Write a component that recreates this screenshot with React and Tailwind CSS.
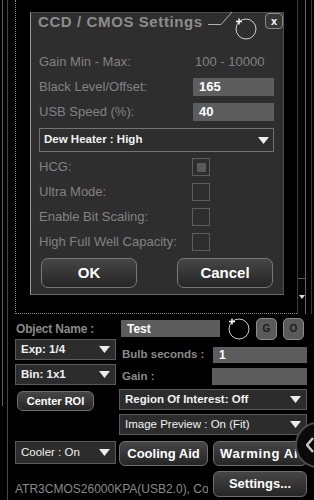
const FONT = "font-['Liberation_Sans',Arial,sans-serif]";

// small white down triangle used by all the combo boxes
function Caret() {
  return (
    <svg width="11" height="7" viewBox="0 0 11 7" className="shrink-0">
      <path d="M0 0H11L5.5 7Z" fill="#ececec" />
    </svg>
  );
}

// busy indicator: thin ring with a sparkle
function Busy() {
  return (
    <svg width="22" height="22" viewBox="0 0 22 22" className="shrink-0 overflow-visible">
      <circle cx="11" cy="11" r="10" fill="none" stroke="#d0d0d0" strokeWidth="1" />
      <path d="M4 0.5v6M1 3.5h6" stroke="#ffffff" strokeWidth="1.4" />
    </svg>
  );
}

function Combo({ label, bold = true, className = "" }) {
  return (
    <div
      className={`flex items-center justify-between border border-[#5a5a5a] bg-[#2c2c2c] pl-[5px] pr-[5px] ${className}`}
    >
      <span
        className={`whitespace-nowrap text-[11.5px] text-[#f2f2f2] ${bold ? "font-bold" : ""}`}
      >
        {label}
      </span>
      <Caret />
    </div>
  );
}

function DarkButton({ children, className = "" }) {
  return (
    <div
      className={`flex items-center justify-center rounded-[6px] border border-[#6e6e6e] bg-linear-to-b from-[#464646] to-[#262626] font-bold text-white ${className}`}
    >
      {children}
    </div>
  );
}

function Field({ value, className = "" }) {
  return (
    <div
      className={`flex items-center bg-[#5d5d5d] pl-[6px] text-[12px] font-bold text-white ${className}`}
    >
      {value}
    </div>
  );
}

function CheckRow({ label, checked }) {
  return (
    <div className="mt-[7px] flex h-[18px] items-center pl-[8px] pr-[9px]">
      <span className="w-[153px] whitespace-nowrap text-[13px] text-[#828282]">{label}</span>
      <div className="flex h-[18px] w-[18px] items-center justify-center border border-[#5c5c5c]">
        {checked && <div className="h-[9px] w-[9px] bg-[#5a5a5a]" />}
      </div>
    </div>
  );
}

function SettingsDialog() {
  return (
    <div className="ml-[14px] mt-[12px] flex h-[283px] w-[254px] flex-col border border-[#4e4e4e] border-l-[#9a9a9a] border-b-[#6a6a6a] bg-[#2e2e2e]">
      {/* title bar */}
      <div className="flex h-[17px] items-start">
        <span className="w-[176px] whitespace-nowrap pl-[7px] text-[15px] font-bold leading-[17px] tracking-[0.6px] text-[#8d8d8d]">
          CCD / CMOS Settings
        </span>
        <svg width="26" height="17" viewBox="0 0 26 17" className="shrink-0 overflow-visible">
          <path d="M1 11.5H14L25 -1" fill="none" stroke="#b0b0b0" strokeWidth="1" />
        </svg>
        <div className="ml-[2px] mt-[5px]">
          <Busy />
        </div>
        <div className="ml-[8px] flex h-[16px] w-[18px] items-center justify-center rounded-[4px] border border-[#8a8a8a] bg-[#363636] text-[11px] font-bold leading-none text-white">
          x
        </div>
      </div>

      <div className="mt-[23px] flex h-[18px] items-center pl-[8px] pr-[9px] text-[13px] text-[#828282]">
        <span className="flex-1">Gain Min - Max:</span>
        <span className="w-[81px] pl-[2px]">100 - 10000</span>
      </div>
      <div className="mt-[7px] flex h-[18px] items-center pl-[8px] pr-[9px]">
        <span className="flex-1 text-[13px] text-[#828282]">Black Level/Offset:</span>
        <Field value="165" className="h-[18px] w-[81px] text-[13px]" />
      </div>
      <div className="mt-[7px] flex h-[18px] items-center pl-[8px] pr-[9px]">
        <span className="flex-1 text-[13px] text-[#828282]">USB Speed (%):</span>
        <Field value="40" className="h-[18px] w-[81px] text-[13px]" />
      </div>

      <div className="mt-[7px] pl-[8px] pr-[9px]">
        <div className="flex h-[24px] items-center justify-between border border-[#747474] pl-[4px] pr-[4px]">
          <span className="text-[11.5px] font-bold text-[#f0f0f0]">Dew Heater : High</span>
          <Caret />
        </div>
      </div>

      <div className="-mt-px" />
      <CheckRow label="HCG:" checked />
      <CheckRow label="Ultra Mode:" />
      <CheckRow label="Enable Bit Scaling:" />
      <CheckRow label="High Full Well Capacity:" />

      <div className="mt-[7px] flex justify-between pl-[10px] pr-[10px]">
        <DarkButton className="h-[30px] w-[96px] rounded-[7px] border-[#777] text-[15px]">OK</DarkButton>
        <DarkButton className="h-[30px] w-[96px] rounded-[7px] border-[#777] text-[15px]">Cancel</DarkButton>
      </div>
    </div>
  );
}

export default function App() {
  return (
    <div className={`relative flex h-[500px] w-[314px] overflow-hidden bg-black ${FONT}`}>
      {/* left frame lines */}
      <div className="flex w-[15px] shrink-0">
        <div className="ml-[2px] h-[406px] w-px bg-[#5e5e5e]" />
        <div className="ml-[4px] h-full w-px bg-[#474747]" />
      </div>

      <div className="flex min-w-0 flex-1 flex-col">
        {/* scrolling settings area */}
        <div className="flex h-[314px] shrink-0">
          <div className="w-[282px] border-b border-l border-dotted border-[#8a8a8a]">
            <SettingsDialog />
          </div>
          <div className="flex w-[9px] flex-col justify-end border-l border-r border-l-[#3a3a3a] border-r-[#626262] bg-[#050505]">
            <div className="flex h-[36px] items-center justify-center border-t border-[#555]">
              <svg width="6" height="4" viewBox="0 0 6 4">
                <path d="M0 0H6L3 4Z" fill="#dddddd" />
              </svg>
            </div>
          </div>
          <div className="ml-[5px] w-px bg-[#383838]" />
        </div>

        {/* camera controls */}
        <div className="flex flex-col pr-[7px]">
          <div className="mt-[4px] flex h-[21px] items-center">
            <span className="w-[106px] pl-[1px] text-[12px] font-bold tracking-[-0.2px] text-[#8a8a8a]">
              Object Name :
            </span>
            <Field value="Test" className="h-[17px] w-[99px] text-[12px]" />
            <div className="ml-[8px]">
              <Busy />
            </div>
            <div className="ml-[6px] flex h-[22px] w-[21px] items-center justify-center rounded-[5px] border border-[#8c8c8c] bg-[#5a5a5a] text-[10px] font-bold text-[#1c1c1c]">
              G
            </div>
            <div className="ml-[6px] flex h-[22px] w-[21px] items-center justify-center rounded-[5px] border border-[#8c8c8c] bg-[#5a5a5a] text-[10px] font-bold text-[#1c1c1c]">
              O
            </div>
          </div>

          <div className="flex">
            <div className="flex w-[101px] flex-col">
              <Combo label="Exp: 1/4" className="h-[21px]" />
              <Combo label="Bin: 1x1" className="mt-[4px] h-[21px]" />
              <DarkButton className="ml-[2px] mt-[6px] h-[20px] w-[77px] text-[11px]">Center ROI</DarkButton>
            </div>
            <div className="ml-[3px] flex flex-1 flex-col">
              <div className="mt-[8px] flex h-[16px] items-center">
                <span className="w-[94px] pl-[3px] text-[11.5px] font-bold text-[#8a8a8a]">Bulb seconds :</span>
                <Field value="1" className="h-[16px] flex-1" />
              </div>
              <div className="mt-[5px] flex h-[17px] items-center">
                <span className="w-[93px] pl-[3px] text-[11.5px] font-bold text-[#8a8a8a]">Gain :</span>
                <Field value="" className="h-[17px] flex-1" />
              </div>
              <Combo label="Region Of Interest: Off" className="mt-[4px] h-[21px]" />
              <Combo label="Image Preview : On (Fit)" bold={false} className="mt-[4px] h-[21px]" />
            </div>
          </div>

          <div className="mt-[6px] flex items-start">
            <Combo label="Cooler : On" bold={false} className="h-[23px] w-[101px]" />
            <DarkButton className="ml-[3px] h-[25px] w-[89px] text-[13px]">Cooling Aid</DarkButton>
            <DarkButton className="ml-[5px] h-[25px] w-[94px] justify-start whitespace-nowrap pl-[6px] text-[13px] tracking-[0.7px]">
              Warming Aid
            </DarkButton>
          </div>

          <div className="mt-[5px] flex">
            <div className="w-[193px] overflow-hidden whitespace-nowrap pt-[11px] text-[12px] leading-[14px] text-[#8a8a8a]">
              ATR3CMOS26000KPA(USB2.0), Co
            </div>
            <DarkButton className="ml-[5px] h-[26px] w-[94px] text-[13px]">Settings...</DarkButton>
          </div>
        </div>
      </div>

      {/* collapse handle sitting over the right edge */}
      <div className="absolute left-[295px] top-[422px] flex h-[46px] w-[46px] items-center rounded-full border-2 border-[#4a4a4a] bg-[#0a0a0a] pl-[9px]">
        <svg width="8" height="16" viewBox="0 0 8 16">
          <path d="M7 1L1 8L7 15" fill="none" stroke="#c8c8c8" strokeWidth="2.5" />
        </svg>
      </div>
    </div>
  );
}
